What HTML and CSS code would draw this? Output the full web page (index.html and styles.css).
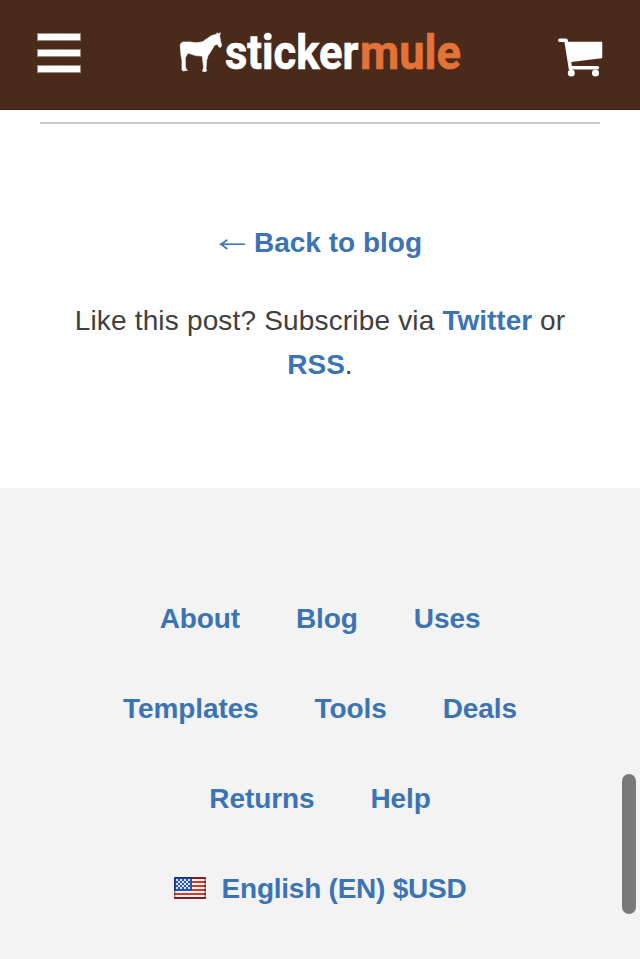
FILE: index.html
```html
<!DOCTYPE html>
<html lang="en">
<head>
<meta charset="utf-8">
<title>Sticker Mule</title>
<link rel="stylesheet" href="styles.css">
</head>
<body>
<header class="topbar">
  <button class="menu" aria-label="Menu"><i></i><i></i><i></i></button>
  <svg class="logo" width="304" height="70" viewBox="0 -10 304 70">
    <g transform="translate(-9 -10) scale(.33333)"><path fill="#fff" stroke="#fff" stroke-width="2" stroke-linejoin="round" d="M31 82Q29 68 40 66L60 66Q80 71 98 65L124 47 139 43 142 38 145 42 151 38 149 47 151 61 155 76 152 82 147 81 143 73 133 76 125 91 114 107 110 121 108 145 110 152 107 155 98 154 98 151 101 144 99 127 97 108Q78 109 65 103L54 99 46 113 46 138 48 146 52 151 39 153 36 149 36 121 33 105Z"/></g>
    <text class="brand" x="46" y="38.6" textLength="133.5" lengthAdjust="spacingAndGlyphs">sticker</text>
    <text class="brand brand-mule" x="181" y="38.6" textLength="101" lengthAdjust="spacingAndGlyphs">mule</text>
  </svg>
  <svg class="cart" width="46" height="40" viewBox="0 0 46 40" fill="none" stroke="#fff" stroke-linecap="round" stroke-linejoin="round">
    <path stroke-width="3.6" d="M2.8 3.2H9L13.5 31.5"/>
    <path fill="#fff" stroke-width="1.5" d="M10 5.5H44.5V20.5L14 24.3Z"/>
    <path stroke-width="3.4" d="M13.5 30.8H40.5"/>
    <circle cx="14.3" cy="36" r="3.5" fill="#fff" stroke="none"/><circle cx="38.5" cy="36" r="3.5" fill="#fff" stroke="none"/>
  </svg>
</header>
<main class="post-end">
  <hr>
  <p class="back"><a href="#"><span class="arrow">←</span><span class="back-label">Back to blog</span></a></p>
  <p class="subscribe">Like this post? Subscribe via <a href="#">Twitter</a> or <br><a href="#">RSS</a>.</p>
</main>
<footer class="footer">
  <nav class="row"><a href="#">About</a><a href="#">Blog</a><a href="#">Uses</a></nav>
  <nav class="row"><a href="#">Templates</a><a href="#">Tools</a><a href="#">Deals</a></nav>
  <nav class="row"><a href="#">Returns</a><a href="#">Help</a></nav>
  <a class="locale" href="#">
    <svg width="32" height="22" viewBox="0 0 32 22">
      <defs>
        <pattern id="stars" x="2" y="2" width="4" height="4" patternUnits="userSpaceOnUse"><path fill="#dbe3f5" d="M0 0h2v2H0zM2 2h2v2H2z"/></pattern>
        <clipPath id="round"><rect width="32" height="22" rx="1.5"/></clipPath>
      </defs>
      <g clip-path="url(#round)">
        <path fill="#f6f2f2" d="M0 0h32v22H0z"/>
        <path fill="#d03a2b" d="M0 0h32v2H0zM0 4h32v2H0zM0 8h32v2H0zM0 12h32v2H0zM0 16h32v2H0zM0 20h32v2H0z"/>
        <path fill="#2855b5" d="M0 0h18v14H0z"/>
        <path fill="url(#stars)" d="M2 2h14v10H2z"/>
        <path fill="#811c20" d="M18 0h14v2H18zM0 20h32v2H0z"/>
        <path fill="#173478" d="M0 0h18v1.5H0zM0 0h1.5v14H0z"/>
        <path fill="#000" fill-opacity=".4" d="M30.3 2H32v18h-1.7zM0 14h1.5v6H0z"/>
      </g>
    </svg>
    <span class="locale-label">English (EN) $USD</span>
  </a>
</footer>
<div class="scroll-thumb"></div>
</body>
</html>
```
FILE: styles.css
```css
* { box-sizing: border-box; }
body {
  margin: 0;
  height: 959px;
  overflow: hidden;
  position: relative;
  display: flex;
  flex-direction: column;
  background: #fff;
  color: #404040;
  font: 28px/44px "Liberation Sans", Arial, sans-serif;
}
a { color: #3c73b5; font-weight: bold; text-decoration: none; letter-spacing: 0; }
.topbar {
  height: 110px;
  flex: none;
  display: flex;
  align-items: flex-start;
  padding: 20px 37px 0;
  background: #4a2a1b;
  border-bottom: 1px solid #42200f;
}
.menu {
  width: 44px;
  margin: 13px 0 0;
  padding: 0;
  border: 0;
  background: none;
  display: flex;
  flex-direction: column;
  gap: 8px;
}
.menu i { height: 8px; background: #fff; border: 1px solid #a08c82; }
.logo { margin-left: 98px; overflow: visible; }
.brand { font: bold 49px Roboto, sans-serif; fill: #fff; stroke: #fff; stroke-width: .7px; }
.brand-mule { fill: #e37338; stroke: #e37338; }
.cart { margin: 17px 0 0 auto; }
.post-end { height: 378px; flex: none; padding: 12px 40px 0; text-align: center; }
hr { height: 2px; margin: 0; border: 0; background: #c8c8c8; }
p { margin: 0; }
.back { margin-top: 97px; }
.back a { display: flex; justify-content: center; gap: 8px; }
.arrow { font-family: "Noto Sans CJK JP", sans-serif; font-weight: normal; transform: scaleY(.75); }
.subscribe { margin-top: 34px; white-space: nowrap; letter-spacing: .17px; }
.footer {
  flex: 1;
  padding-top: 109px;
  display: flex;
  flex-direction: column;
  gap: 46px;
  background: #f3f3f3;
}
.row { display: flex; justify-content: center; gap: 56px; }
.row a { letter-spacing: -.1px; }
.locale { display: flex; justify-content: center; align-items: center; gap: 16px; }
.locale svg { position: relative; top: -1px; }
.locale-label { letter-spacing: -.24px; }
.scroll-thumb {
  position: absolute;
  right: 4px;
  top: 774px;
  width: 14px;
  height: 140px;
  border-radius: 7px;
  background: #797979;
}
```
